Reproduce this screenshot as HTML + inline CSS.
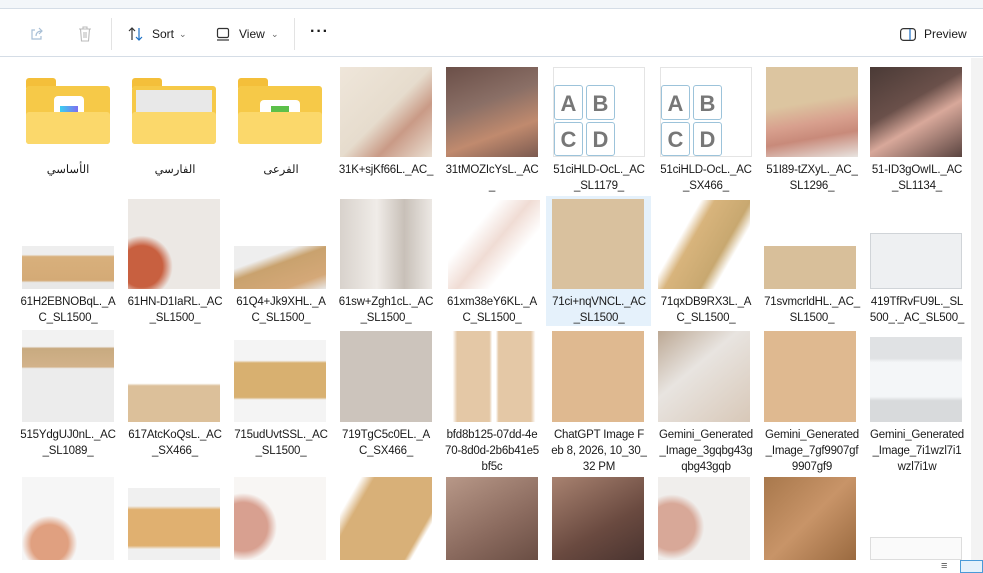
<!DOCTYPE html>
<html><head><meta charset="utf-8"><style>
*{margin:0;padding:0;box-sizing:border-box}
body{width:983px;height:573px;overflow:hidden;background:#fff;font-family:"Liberation Sans","Noto Sans CJK SC",sans-serif;position:relative}
.top{position:absolute;left:0;top:0;width:983px;height:9px;background:#f3f6f9;border-bottom:1px solid #d5dde6}
.tb{position:absolute;left:0;top:10px;width:983px;height:47px;background:#fff;border-bottom:1px solid #d5dde6;font-size:12px;color:#1a1a1a}
.tb span{position:absolute;top:17px}
.sep{position:absolute;top:8px;width:1px;height:32px;background:#e3e3e3}
.t{position:absolute;width:92px;overflow:hidden}
.l{position:absolute;width:96px;margin-left:5px;text-align:center;font-size:11.5px;line-height:16px;color:#1a1a1a;word-break:break-all;letter-spacing:-0.2px}
.sb{position:absolute;left:971px;top:58px;width:12px;height:502px;background:#f3f3f3}
.bot{position:absolute;left:0;top:560px;width:983px;height:13px;background:#fff}
.k{position:absolute;width:29px;border:1px solid #9cc3da;border-radius:3px;text-align:center}
</style></head><body>
<div class="top"></div>
<div class="tb">
<svg style="position:absolute;left:29px;top:16px" width="16" height="16" viewBox="0 0 16 16" fill="none" stroke="#a8bfd6" stroke-width="1.2"><path d="M6 4H3v9h9v-3"/><path d="M7 10c0-3 2-5 6-5M10 2l3 3-3 3"/></svg>
<svg style="position:absolute;left:78px;top:16px" width="14" height="16" viewBox="0 0 14 16" fill="none" stroke="#bbb" stroke-width="1.1"><path d="M1 3h12M5 3V1h4v2M2.5 3l1 12h7l1-12M6 6v6M8 6v6"/></svg>
<div class="sep" style="left:111px"></div>
<svg style="position:absolute;left:128px;top:16px" width="16" height="16" viewBox="0 0 16 16" fill="none" stroke="#333" stroke-width="1.2"><path d="M4 14V2M1 5l3-3 3 3"/><path d="M11 2v12M8 11l3 3 3-3" stroke="#1a6fc4"/></svg>
<span style="left:152px">Sort</span><span style="left:179px;font-size:9px;top:19px;color:#666">⌄</span>
<svg style="position:absolute;left:216px;top:17px" width="14" height="14" viewBox="0 0 14 14" fill="none" stroke="#333" stroke-width="1.2"><rect x="1.5" y="1.5" width="11" height="9" rx="1.5"/><path d="M1 13h12"/></svg>
<span style="left:239px">View</span><span style="left:271px;font-size:9px;top:19px;color:#666">⌄</span>
<div class="sep" style="left:294px"></div>
<span style="left:310px;top:13px;font-size:16px;font-weight:bold;letter-spacing:1px">···</span>
<svg style="position:absolute;left:900px;top:18px" width="16" height="13" viewBox="0 0 16 13" fill="none" stroke="#333" stroke-width="1.2"><rect x="0.6" y="0.6" width="14.8" height="11.8" rx="3"/><path d="M10 1v11" stroke="#1a6fc4"/></svg>
<span style="left:924px">Preview</span>
</div>

<div style="position:absolute;left:26px;top:78px;width:84px;height:66px">
<div style="position:absolute;left:0;top:0;width:30px;height:10px;background:#f4bf3a;border-radius:3px 3px 0 0"></div>
<div style="position:absolute;left:0;top:8px;width:84px;height:58px;background:#f6c948;border-radius:3px"></div>
<div style="position:absolute;left:28px;top:18px;width:30px;height:30px;background:#fff;border-radius:4px"><div style="margin:10px 6px;height:14px;background:linear-gradient(90deg,#3ad0f0,#7e6ef0)"></div></div>
<div style="position:absolute;left:0;top:34px;width:84px;height:32px;background:#fbd86b;border-radius:3px"></div></div>
<div style="position:absolute;left:132px;top:78px;width:84px;height:66px">
<div style="position:absolute;left:0;top:0;width:30px;height:10px;background:#f4bf3a;border-radius:3px 3px 0 0"></div>
<div style="position:absolute;left:0;top:8px;width:84px;height:58px;background:#f6c948;border-radius:3px"></div>
<div style="position:absolute;left:4px;top:12px;width:76px;height:30px;background:#e8e8e8"></div>
<div style="position:absolute;left:0;top:34px;width:84px;height:32px;background:#fbd86b;border-radius:3px"></div></div>
<div style="position:absolute;left:238px;top:78px;width:84px;height:66px">
<div style="position:absolute;left:0;top:0;width:30px;height:10px;background:#f4bf3a;border-radius:3px 3px 0 0"></div>
<div style="position:absolute;left:0;top:8px;width:84px;height:58px;background:#f6c948;border-radius:3px"></div>
<div style="position:absolute;left:22px;top:22px;width:40px;height:22px;background:#fff;border-radius:4px"><div style="margin:6px 11px;height:14px;background:#5cc04a"></div></div>
<div style="position:absolute;left:0;top:34px;width:84px;height:32px;background:#fbd86b;border-radius:3px"></div></div>
<div class="l" style="left:15px;top:162px">الأساسي</div>
<div class="l" style="left:122px;top:162px">الفارسي</div>
<div class="l" style="left:228px;top:162px">الفرعى</div>

<div class="t" style="left:340px;top:67px;height:90px;background:linear-gradient(135deg,#efe6da,#e6dccd 50%,#c99a86 70%,#eadfd2)"></div>
<div class="t" style="left:446px;top:67px;height:90px;background:linear-gradient(160deg,#6b4f48,#8a6f66 40%,#c08a6e 70%,#7b5a50)"></div>
<div class="t" style="left:553px;top:67px;height:90px;background:#fff;border:1px solid #e4e4e4;font:bold 22px 'Liberation Sans';color:#777">
<div class="k" style="left:0;top:17px;height:35px;line-height:35px">A</div>
<div class="k" style="left:32px;top:17px;height:35px;line-height:35px">B</div>
<div class="k" style="left:0;top:54px;height:34px;line-height:34px">C</div>
<div class="k" style="left:32px;top:54px;height:34px;line-height:34px">D</div></div>
<div class="t" style="left:660px;top:67px;height:90px;background:#fff;border:1px solid #e4e4e4;font:bold 22px 'Liberation Sans';color:#777">
<div class="k" style="left:0;top:17px;height:35px;line-height:35px">A</div>
<div class="k" style="left:32px;top:17px;height:35px;line-height:35px">B</div>
<div class="k" style="left:0;top:54px;height:34px;line-height:34px">C</div>
<div class="k" style="left:32px;top:54px;height:34px;line-height:34px">D</div></div>
<div class="t" style="left:766px;top:67px;height:90px;background:linear-gradient(170deg,#dcc5a0 40%,#d8a08e 60%,#c88a7a 75%,#e8e4e0)"></div>
<div class="t" style="left:870px;top:67px;height:90px;background:linear-gradient(150deg,#4a3a36,#6a504a 40%,#d8a89a 60%,#5a4440)"></div>
<div class="l" style="left:333px;top:162px">31K+sjKf66L._AC_</div>
<div class="l" style="left:439px;top:162px">31tMOZIcYsL._AC_</div>
<div class="l" style="left:546px;top:162px">51ciHLD-OcL._AC_SL1179_</div>
<div class="l" style="left:653px;top:162px">51ciHLD-OcL._AC_SX466_</div>
<div class="l" style="left:759px;top:162px">51I89-tZXyL._AC_SL1296_</div>
<div class="l" style="left:864px;top:162px">51-ID3gOwIL._AC_SL1134_</div>

<div style="position:absolute;left:546px;top:196px;width:105px;height:130px;background:#e5f1fb"></div>
<div class="t" style="left:22px;top:246px;height:43px;background:linear-gradient(#eee 20%,#d8b07c 25%,#d4aa76 80%,#e8e8e8 85%)"></div>
<div class="t" style="left:128px;top:199px;height:90px;background:radial-gradient(circle at 15% 75%,#c86040 20%,transparent 30%),#ece8e4"></div>
<div class="t" style="left:234px;top:246px;height:43px;background:linear-gradient(160deg,#eee 30%,#c9a26e 45%,#d4a878 80%,#e8e8e8)"></div>
<div class="t" style="left:340px;top:199px;height:90px;background:linear-gradient(90deg,#d8d2cc,#f0ece8 40%,#c8c0b8 70%,#ece8e4)"></div>
<div class="t" style="left:448px;top:200px;height:89px;background:linear-gradient(130deg,#fff 30%,#f0dcd4 50%,#fff 70%)"></div>
<div class="t" style="left:552px;top:199px;height:90px;background:#d9c19e"></div>
<div class="t" style="left:658px;top:200px;height:89px;background:linear-gradient(120deg,#fff 30%,#d8b47c 40%,#c8a870 65%,#fff 75%)"></div>
<div class="t" style="left:764px;top:246px;height:43px;background:#d8bf9a"></div>
<div class="t" style="left:870px;top:233px;height:56px;background:#eef0f2;border:1px solid #d0d4d8"></div>
<div class="l" style="left:15px;top:294px">61H2EBNOBqL._AC_SL1500_</div>
<div class="l" style="left:122px;top:294px">61HN-D1IaRL._AC_SL1500_</div>
<div class="l" style="left:228px;top:294px">61Q4+Jk9XHL._AC_SL1500_</div>
<div class="l" style="left:333px;top:294px">61sw+Zgh1cL._AC_SL1500_</div>
<div class="l" style="left:439px;top:294px">61xm38eY6KL._AC_SL1500_</div>
<div class="l" style="left:546px;top:294px">71ci+nqVNCL._AC_SL1500_</div>
<div class="l" style="left:653px;top:294px">71qxDB9RX3L._AC_SL1500_</div>
<div class="l" style="left:759px;top:294px">71svmcrldHL._AC_SL1500_</div>
<div class="l" style="left:864px;top:294px">419TfRvFU9L._SL500_._AC_SL500_</div>

<div class="t" style="left:22px;top:330px;height:92px;background:linear-gradient(#f2f2f2 18%,#c8aa80 20%,#d2b28a 40%,#ececec 42%)"></div>
<div class="t" style="left:128px;top:336px;height:86px;background:linear-gradient(#fff 55%,#dcc09a 58%)"></div>
<div class="t" style="left:234px;top:340px;height:82px;background:linear-gradient(#f4f4f4 25%,#d8b070 28%,#d8b070 70%,#f4f4f4 73%)"></div>
<div class="t" style="left:340px;top:331px;height:91px;background:#ccc4bc"></div>
<div class="t" style="left:448px;top:331px;height:91px;background:linear-gradient(90deg,#fff 5%,#e4c8a6 10%,#e4c8a6 45%,#fff 48%,#fff 52%,#e4c8a6 55%,#e4c8a6 90%,#fff 95%)"></div>
<div class="t" style="left:552px;top:331px;height:91px;background:#dfb990"></div>
<div class="t" style="left:658px;top:331px;height:91px;background:linear-gradient(140deg,#bca894,#e8e4e0 40%,#d8c8b8)"></div>
<div class="t" style="left:764px;top:331px;height:91px;background:#dfb990"></div>
<div class="t" style="left:870px;top:337px;height:85px;background:linear-gradient(#e0e2e4 25%,#f4f6f8 30%,#f4f6f8 70%,#d8dadc 75%)"></div>
<div class="l" style="left:15px;top:427px">515YdgUJ0nL._AC_SL1089_</div>
<div class="l" style="left:122px;top:427px">617AtcKoQsL._AC_SX466_</div>
<div class="l" style="left:228px;top:427px">715udUvtSSL._AC_SL1500_</div>
<div class="l" style="left:333px;top:427px">719TgC5c0EL._AC_SX466_</div>
<div class="l" style="left:439px;top:427px">bfd8b125-07dd-4e70-8d0d-2b6b41e5bf5c</div>
<div class="l" style="left:546px;top:427px">ChatGPT Image Feb 8, 2026, 10_30_32 PM</div>
<div class="l" style="left:653px;top:427px">Gemini_Generated_Image_3gqbg43gqbg43gqb</div>
<div class="l" style="left:759px;top:427px">Gemini_Generated_Image_7gf9907gf9907gf9</div>
<div class="l" style="left:864px;top:427px">Gemini_Generated_Image_7i1wzl7i1wzl7i1w</div>

<div class="t" style="left:22px;top:477px;height:83px;background:radial-gradient(circle at 30% 80%,#e0a080 20%,transparent 30%),#f6f6f6"></div>
<div class="t" style="left:128px;top:488px;height:72px;background:linear-gradient(#f0f0f0 25%,#e0b070 30%,#e0b070 80%,#f0f0f0 85%)"></div>
<div class="t" style="left:234px;top:477px;height:83px;background:radial-gradient(circle at 10% 60%,#d8a090 25%,transparent 35%),#f8f6f4"></div>
<div class="t" style="left:340px;top:477px;height:83px;background:linear-gradient(120deg,#fff 15%,#d8b078 25%,#d8b078 80%,#fff 85%)"></div>
<div class="t" style="left:446px;top:477px;height:83px;background:linear-gradient(150deg,#b89888,#8a6a5e 60%,#6a4e44)"></div>
<div class="t" style="left:552px;top:477px;height:83px;background:linear-gradient(150deg,#a88270,#6a4a40 60%,#4a3430)"></div>
<div class="t" style="left:658px;top:477px;height:83px;background:radial-gradient(circle at 15% 60%,#d8a898 25%,transparent 35%),#f0eeec"></div>
<div class="t" style="left:764px;top:477px;height:83px;background:linear-gradient(135deg,#a8784c,#c89468 50%,#9a6a40)"></div>
<div class="t" style="left:870px;top:537px;height:23px;background:#fafafa;border:1px solid #ddd"></div>

<div class="sb"></div>
<div class="bot"><span style="position:absolute;left:941px;top:0;font-size:11px;color:#555">≡</span><div style="position:absolute;left:960px;top:0;width:23px;height:13px;background:#e5f1fb;border:1px solid #4a9ad8"></div></div>
</body></html>
